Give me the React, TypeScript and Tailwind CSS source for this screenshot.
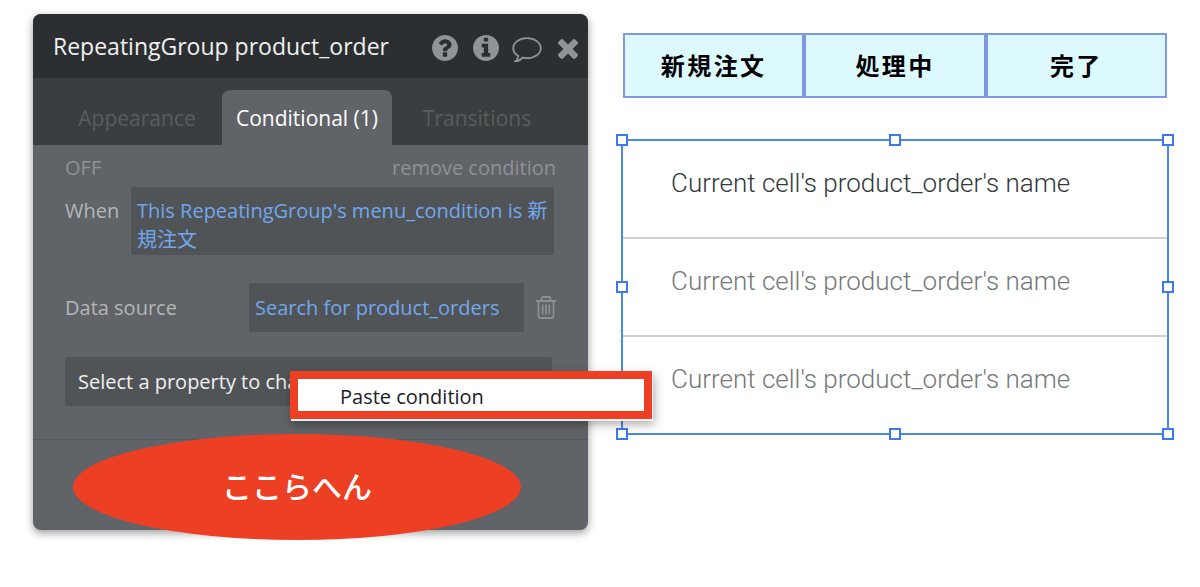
import { clsx } from "clsx";

const CIRCLE =
  "M1664 896q0 209-103 385.5t-279.5 279.5-385.5 103-385.5-103-279.5-279.5-103-385.5 103-385.5 279.5-279.5 385.5-103 385.5 103 279.5 279.5 103 385.5z";

const QuestionIcon = () => (
  <svg viewBox="128 128 1536 1536" className="size-[26px]" fill="currentColor" fillRule="evenodd" aria-hidden="true">
    <path
      d={
        "M1024 1376v-192q0-14-9-23t-23-9h-192q-14 0-23 9t-9 23v192q0 14 9 23t23 9h192q14 0 23-9t9-23zm256-672q0-88-55.5-163t-138.5-116-170-41q-243 0-371 213-15 24 8 42l132 100q7 6 19 6 16 0 25-12 53-68 86-92 34-24 86-24 48 0 85.5 26t37.5 59q0 38-20 61t-68 45q-63 28-115.5 86.5t-52.5 125.5v36q0 14 9 23t23 9h192q14 0 23-9t9-23q0-19 21.5-49.5t54.5-49.5q32-18 49-28.5t46-35 44.5-48 28-60.5 12.5-81z" +
        CIRCLE
      }
    />
  </svg>
);

const InfoIcon = () => (
  <svg viewBox="128 128 1536 1536" className="size-[26px]" fill="currentColor" fillRule="evenodd" aria-hidden="true">
    <path
      d={
        "M1152 1376v-160q0-14-9-23t-23-9h-96v-512q0-14-9-23t-23-9h-320q-14 0-23 9t-9 23v160q0 14 9 23t23 9h96v320h-96q-14 0-23 9t-9 23v160q0 14 9 23t23 9h448q14 0 23-9t9-23zm-128-896v-160q0-14-9-23t-23-9h-192q-14 0-23 9t-9 23v160q0 14 9 23t23 9h192q14 0 23-9t9-23z" +
        CIRCLE
      }
    />
  </svg>
);

const CommentIcon = () => (
  <svg viewBox="0 -3 30 28" className="h-7 w-[30px]" fill="none" stroke="currentColor" strokeWidth="1.8" strokeLinejoin="round" aria-hidden="true">
    <path d="M15 1.2C7.300 1.200 1.200 5.700 1.200 11.200c0 3.200 2 6 5.100 7.900-.3 2.200-1.300 3.900-3.300 5.500 3.300-.4 5.700-1.600 7.800-3.900 1.400.3 2.800.5 4.200.5 7.700 0 13.800-4.500 13.800-10S22.700 1.200 15 1.200z" />
  </svg>
);

const CloseIcon = () => (
  <svg viewBox="302 306 1188 1248" className="h-[21px] w-5" fill="currentColor" aria-hidden="true">
    <path d="M1490 1322q0 40-28 68l-136 136q-28 28-68 28t-68-28l-294-294-294 294q-28 28-68 28t-68-28l-136-136q-28-28-28-68t28-68l294-294-294-294q-28-28-28-68t28-68l136-136q28-28 68-28t68 28l294 294 294-294q28-28 68-28t68 28l136 136q28 28 28 68t-28 68l-294 294 294 294q28 28 28 68z" />
  </svg>
);

const TrashIcon = () => (
  <svg viewBox="0 0 20 23" className="h-[23px] w-5" fill="none" stroke="currentColor" strokeWidth="1.8" aria-hidden="true">
    <path d="M0 5h20M5.500 5V3.200q0-2.200 2.200-2.200h4.600q2.200 0 2.200 2.200V5M2.500 5v15q0 2 2 2h11q2 0 2-2V5" />
    <path d="M6.700 8.500v10M10 8.500v10M13.300 8.500v10" />
  </svg>
);

const actions = [
  { label: "Help", icon: QuestionIcon },
  { label: "Info", icon: InfoIcon },
  { label: "Comment", icon: CommentIcon },
  { label: "Close", icon: CloseIcon },
];

const tabs = ["Appearance", "Conditional (1)", "Transitions"];

const statuses = ["新規注文", "処理中", "完了"];

const handles = [
  "left-0 top-0",
  "left-1/2 top-0",
  "left-full top-0",
  "left-0 top-1/2",
  "left-full top-1/2",
  "left-0 top-full",
  "left-1/2 top-full",
  "left-full top-full",
];

const PropertyEditor = () => (
  <section className="relative z-10 rounded-lg bg-[#606367] pb-[90px] text-xl text-[#b4b6b8] shadow-[0_3px_8px_rgba(0,0,0,0.4)]">
    {/* Title bar */}
    <header className="flex h-16 items-center justify-between rounded-t-lg bg-[#2b2f31] pl-5">
      <h1 className="text-[23px] whitespace-nowrap text-[#f0f0f0]">RepeatingGroup product_order</h1>
      <div className="flex items-center pt-1 text-[#909498]">
        {actions.map((a) => (
          <button key={a.label} type="button" aria-label={a.label} className="flex w-[41px] justify-center">
            <a.icon />
          </button>
        ))}
      </div>
    </header>

    {/* Tabs */}
    <div role="tablist" className="flex h-[67px] items-end bg-[#3b3e40] px-[19px] text-[21px]">
      {tabs.map((tab, i) => (
        <button
          key={tab}
          type="button"
          role="tab"
          aria-selected={i === 1}
          className={clsx(
            "h-[55px] w-[170px] rounded-t-lg pt-0.5 whitespace-nowrap",
            i === 1 ? "bg-[#606367] text-white" : "text-[#595c5f]",
          )}
        >
          {tab}
        </button>
      ))}
    </div>

    {/* Condition */}
    <div className="border-b border-[#55585b] px-8 pt-[9px] pb-[33px]">
      <div className="flex h-[33px] items-start justify-between text-[#8f9294]">
        <span>OFF</span>
        <button type="button">remove condition</button>
      </div>

      <div className="flex items-start pr-0.5">
        <span className="w-[66px] shrink-0 pt-2.5">When</span>
        <button
          type="button"
          className="flex-1 rounded-xs bg-[#505457] px-1.5 pt-[9px] pb-px text-left leading-[29px] text-[#72a7ec]"
        >
          This RepeatingGroup's menu_condition is 新規注文
        </button>
      </div>

      <div className="mt-7 flex items-center">
        <span className="flex-1">Data source</span>
        <button type="button" className="h-[49px] w-[275px] rounded-xs bg-[#505457] px-1.5 text-left text-[#72a7ec]">
          Search for product_orders
        </button>
        <button type="button" aria-label="Delete property" className="ml-3 text-[#8b8f91]">
          <TrashIcon />
        </button>
      </div>

      <div className="mt-[25px] pr-1">
        <select
          aria-label="Property to change"
          className="block h-[49px] w-full appearance-none rounded-xs bg-[#505457] px-[13px] text-[#f0f0f0]"
        >
          <option>Select a property to change</option>
        </select>
      </div>
    </div>

    {/* Context menu */}
    <div role="menu" className="absolute top-[357px] left-[257px] w-[362px] border-8 border-[#ec3f24] bg-white shadow-[1px_2px_0_#f4f4f4,2px_5px_10px_rgba(0,0,0,0.35)]">
      <button type="button" role="menuitem" className="block w-full px-[42px] pt-1 text-left text-[#1c2024]">
        Paste condition
      </button>
    </div>

    {/* Callout */}
    <div className="absolute top-[420px] left-10 flex h-[106px] w-[448px] items-center justify-center rounded-[50%] bg-[#ec3f24] text-3xl font-medium text-white">
      ここらへん
    </div>
  </section>
);

const Preview = () => (
  <section className="pt-[19px]">
    <div className="mr-0.5 ml-0.5 grid grid-cols-3">
      {statuses.map((s) => (
        <button
          key={s}
          type="button"
          className="h-[65px] border-2 border-[#8097e6] bg-[#dcf9fe] text-2xl font-bold tracking-widest text-black"
        >
          {s}
        </button>
      ))}
    </div>

    <div className="relative mt-[41px] border-2 border-[#4a8ae6] font-[Roboto,'Noto_Sans_CJK_JP',sans-serif] text-[26px] font-light">
      <ul>
        {[0, 1, 2].map((row) => (
          <li
            key={row}
            className={clsx(
              "flex items-center px-12 pb-3",
              row === 0 ? "h-24 text-[#33383b]" : "h-[98px] border-t-2 border-[#cfcfcf] text-[#757879]",
            )}
          >
            Current cell's product_order's name
          </li>
        ))}
      </ul>
      {/* Resize handles, centred on the border line */}
      <div className="absolute -inset-px">
        {handles.map((pos) => (
          <span key={pos} className={clsx("absolute size-3 -translate-1/2 border-2 border-[#3c78ee] bg-white", pos)} />
        ))}
      </div>
    </div>
  </section>
);

const App = () => (
  <main className="grid grid-cols-[555fr_548fr] items-start gap-[33px] bg-white pt-3.5 pr-[31px] pb-14 pl-[33px] font-['Open_Sans','Noto_Sans_CJK_JP',sans-serif]">
    <PropertyEditor />
    <Preview />
  </main>
);

export default App;
